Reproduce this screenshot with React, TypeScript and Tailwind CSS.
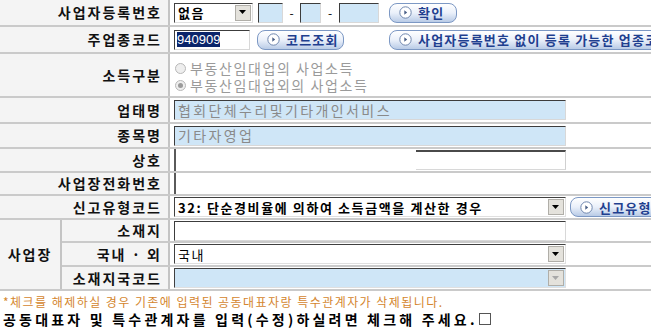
import React from "react";

const font = "font-['Noto_Sans_CJK_KR','Noto_Sans',sans-serif]";

function Arrow({ disabled }: { disabled?: boolean }) {
  return (
    <div className="w-[16px] h-[16px] bg-[#e4e2dc] border border-[#b0aea8] flex items-center justify-center shrink-0">
      <svg width="8" height="5" viewBox="0 0 8 5">
        <path d="M0 0h7L3.5 4z" fill={disabled ? "#a8a8a8" : "#000"} />
      </svg>
    </div>
  );
}

function Select({ value, className, disabled, bold }: { value: string; className: string; disabled?: boolean; bold?: boolean }) {
  return (
    <div
      className={`flex items-center justify-between shrink-0 border border-[#808080] border-t-[#404040] border-l-[#404040] border-b-[#e0e0e0] border-r-[#e0e0e0] pl-[3px] pr-[1px] ${className}`}
    >
      <span className={`text-[13px] leading-none tracking-[1.6px] text-black whitespace-nowrap ${bold ? "font-bold" : ""}`}>{value}</span>
      <Arrow disabled={disabled} />
    </div>
  );
}

function Box({ className, children }: { className: string; children?: React.ReactNode }) {
  return (
    <div
      className={`flex items-center shrink-0 border border-t-[#3c3c3c] border-l-[#3c3c3c] border-b-[#d8d8d8] border-r-[#d8d8d8] ${className}`}
    >
      {children}
    </div>
  );
}

function Btn({ label, className }: { label: string; className: string }) {
  return (
    <div
      className={`h-[20px] shrink-0 flex items-center gap-[6px] pl-[9px] rounded-[8px] border border-[#7c98c4] bg-gradient-to-b from-[#ffffff] via-[#eaf0fa] to-[#b9cbe6] whitespace-nowrap overflow-hidden ${className}`}
    >
      <svg width="13" height="13" viewBox="0 0 13 13" className="shrink-0">
        <circle cx="6.5" cy="6.5" r="5.7" fill="#fff" stroke="#6f86ad" strokeWidth="1" />
        <path d="M5.3 4.2 8.2 6.5 5.3 8.8z" fill="#4a5f86" />
      </svg>
      <span className="text-[13px] font-bold leading-none tracking-[1.2px] text-[#1f3f8f]">{label}</span>
    </div>
  );
}

function Radio({ checked }: { checked?: boolean }) {
  return (
    <span className="w-[11px] h-[11px] rounded-full border border-[#b8b8b8] bg-[#eeeeee] flex items-center justify-center shrink-0">
      {checked && <span className="w-[5px] h-[5px] rounded-full bg-[#9a9a9a]" />}
    </span>
  );
}

function Label({ text }: { text: string }) {
  return <span className="text-[14px] font-bold tracking-[2px] text-[#111] whitespace-nowrap">{text}</span>;
}

function Row({ label, h, children }: { label: string; h: string; children?: React.ReactNode }) {
  return (
    <div className={`flex ${h} border-b-2 border-[#cacaca]`}>
      <div className="w-[170px] shrink-0 bg-[#f4f4f4] flex items-center justify-end pr-[6px] border-r-2 border-[#c4c4c4]">
        <Label text={label} />
      </div>
      <div className="flex-1 flex items-center pl-[4px] bg-white min-w-0 overflow-hidden">{children}</div>
    </div>
  );
}

function SubRow({ label, h, last, children }: { label: string; h: string; last?: boolean; children?: React.ReactNode }) {
  return (
    <div className={`flex ${h} ${last ? "" : "border-b-2 border-[#cacaca]"}`}>
      <div className="w-[108px] shrink-0 bg-[#f4f4f4] flex items-center justify-end pr-[6px] border-r-2 border-[#c4c4c4]">
        <Label text={label} />
      </div>
      <div className="flex-1 flex items-center pl-[4px] bg-white min-w-0 overflow-hidden">{children}</div>
    </div>
  );
}

export default function App() {
  return (
    <div className={`w-[651px] h-[335px] bg-white overflow-hidden ${font}`}>
      <Row label="사업자등록번호" h="h-[27px]">
        <Select value="없음" className="w-[79px] h-[20px]" bold />
        <Box className="w-[25px] h-[20px] bg-[#cfe6f7] ml-[5px]" />
        <span className="w-[17px] shrink-0 text-center text-[12px]">-</span>
        <Box className="w-[21px] h-[20px] bg-[#cfe6f7]" />
        <span className="w-[18px] shrink-0 text-center text-[12px]">-</span>
        <Box className="w-[40px] h-[20px] bg-[#cfe6f7]" />
        <Btn label="확인" className="w-[68px] ml-[10px]" />
      </Row>
      <Row label="주업종코드" h="h-[27px]">
        <Box className="w-[76px] h-[20px] bg-white pl-[2px]">
          <span className="bg-[#0a246a] text-white text-[13px] leading-[15px] font-['Liberation_Sans',sans-serif]">940909</span>
        </Box>
        <Btn label="코드조회" className="w-[87px] ml-[7px]" />
        <Btn label="사업자등록번호 없이 등록 가능한 업종코드" className="w-[300px] ml-[45px]" />
      </Row>
      <Row label="소득구분" h="h-[44px]">
        <div className="flex flex-col pl-[1px] pt-[4px]">
          <div className="flex items-center gap-[4px] text-[14px] leading-[17px] tracking-[1.6px] text-[#9a9a9a] whitespace-nowrap">
            <Radio />
            <span className="leading-[17px]">부동산임대업의 사업소득</span>
          </div>
          <div className="flex items-center gap-[4px] text-[14px] leading-[17px] tracking-[1.6px] text-[#9a9a9a] whitespace-nowrap">
            <Radio checked />
            <span className="leading-[17px]">부동산임대업외의 사업소득</span>
          </div>
        </div>
      </Row>
      <Row label="업태명" h="h-[26px]">
        <Box className="w-[392px] h-[20px] bg-[#cfe6f7] pl-[3px]">
          <span className="text-[14px] tracking-[2.4px] text-[#8a8a8a]">협회단체수리및기타개인서비스</span>
        </Box>
      </Row>
      <Row label="종목명" h="h-[25px]">
        <Box className="w-[392px] h-[20px] bg-[#cfe6f7] pl-[3px]">
          <span className="text-[14px] tracking-[2.4px] text-[#8a8a8a]">기타자영업</span>
        </Box>
      </Row>
      <Row label="상호" h="h-[24px]">
        <div className="w-[392px] h-full shrink-0 flex border-l-2 border-[#5a5a5a]">
          <div className="flex-1" />
          <div className="w-[150px] h-[20px] mt-[1px] border-t-2 border-t-[#4a4a4a] border-r border-r-[#d0d0d0] border-b border-b-[#d8d8d8]" />
        </div>
      </Row>
      <Row label="사업장전화번호" h="h-[23px]">
        <div className="w-[392px] h-full shrink-0 border-l-2 border-[#5a5a5a]" />
      </Row>
      <Row label="신고유형코드" h="h-[24px]">
        <Select value="32: 단순경비율에 의하여 소득금액을 계산한 경우" className="w-[392px] h-[20px]" bold />
        <Btn label="신고유형" className="w-[100px] ml-[4px]" />
      </Row>
      <div className="flex border-b-2 border-[#cacaca]">
        <div className="w-[62px] shrink-0 bg-[#f4f4f4] flex items-center justify-center border-r-2 border-[#c4c4c4]">
          <Label text="사업장" />
        </div>
        <div className="flex-1 flex flex-col">
          <SubRow label="소재지" h="h-[23px]">
            <Box className="w-[392px] h-[20px] bg-white" />
          </SubRow>
          <SubRow label="국내 · 외" h="h-[24px]">
            <Select value="국내" className="w-[392px] h-[20px]" />
          </SubRow>
          <SubRow label="소재지국코드" h="h-[22px]" last>
            <Select value="" className="w-[392px] h-[20px] bg-[#cfe6f7]" disabled />
          </SubRow>
        </div>
      </div>
      <div className="pl-[3px] pt-[3px] text-[12px] leading-[16px] tracking-[1.45px] text-[#d4862e] whitespace-nowrap">
        *체크를 해제하실 경우 기존에 입력된 공동대표자랑 특수관계자가 삭제됩니다.
      </div>
      <div className="pl-[3px] flex items-center text-[14px] leading-[18px] font-bold tracking-[3.2px] text-black whitespace-nowrap">
        공동대표자 및 특수관계자를 입력(수정)하실려면 체크해 주세요.
        <span className="w-[12px] h-[12px] border border-[#555] bg-white ml-[1px] shrink-0" />
      </div>
    </div>
  );
}
